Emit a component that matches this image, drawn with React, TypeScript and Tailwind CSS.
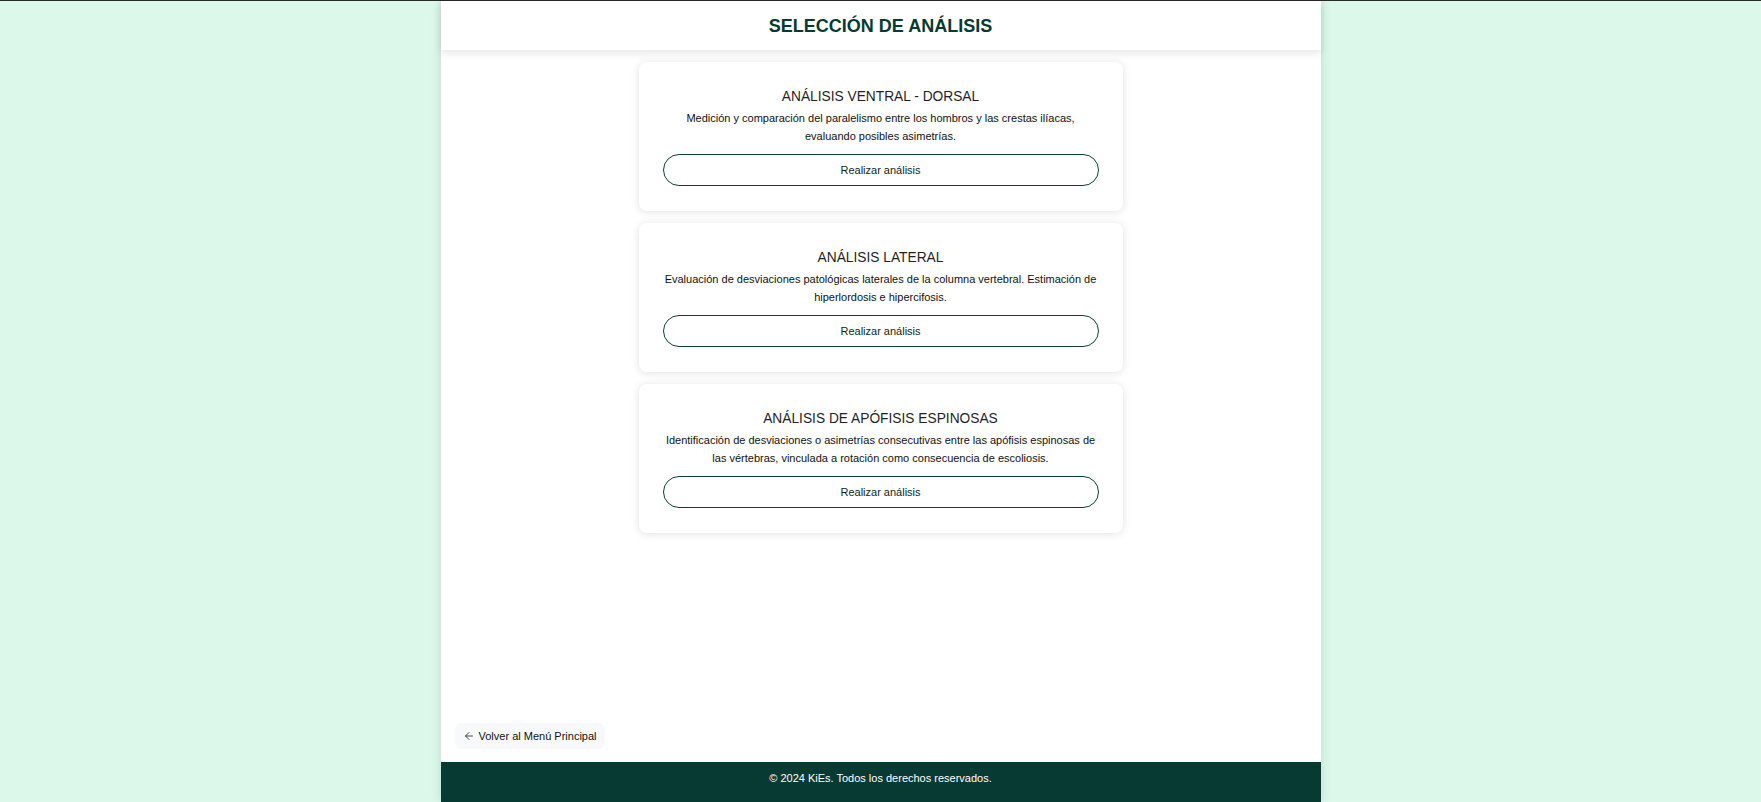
import { ArrowLeft } from 'lucide-react';

type Analisis = {
  titulo: string;
  descripcion: string[];
};

const analisis: Analisis[] = [
  {
    titulo: 'ANÁLISIS VENTRAL - DORSAL',
    descripcion: [
      'Medición y comparación del paralelismo entre los hombros y las crestas ilíacas,',
      'evaluando posibles asimetrías.',
    ],
  },
  {
    titulo: 'ANÁLISIS LATERAL',
    descripcion: [
      'Evaluación de desviaciones patológicas laterales de la columna vertebral. Estimación de',
      'hiperlordosis e hipercifosis.',
    ],
  },
  {
    titulo: 'ANÁLISIS DE APÓFISIS ESPINOSAS',
    descripcion: [
      'Identificación de desviaciones o asimetrías consecutivas entre las apófisis espinosas de',
      'las vértebras, vinculada a rotación como consecuencia de escoliosis.',
    ],
  },
];

const AnalisisCard = ({ item }: { item: Analisis }) => {
  return (
    <div className="w-[484px] rounded-lg bg-white px-6 pt-[25px] pb-[25px] text-center shadow-[0_1px_8px_rgba(0,0,0,0.12)]">
      <h2 className="text-[13.75px] leading-5 text-[#1f1f1f]">{item.titulo}</h2>
      <p className="mt-0.5 text-[11px] leading-[18px] text-[#111]">
        {item.descripcion[0]}
        <br />
        {item.descripcion[1]}
      </p>
      <button className="mt-[9px] flex h-8 w-full items-center justify-center rounded-full border-[1.5px] border-[#0c4037] bg-white text-[11px] text-[#0f1f1c]">
        Realizar análisis
      </button>
    </div>
  );
};

const App = () => {
  return (
    <div
      className="flex min-h-screen justify-center border-t border-[#2a2a2a] bg-[#dbf8ea]"
      style={{ fontFamily: '"Liberation Sans", Arial, sans-serif' }}
    >
      <div className="flex h-[801px] w-[880px] flex-col bg-white shadow-[0_0_10px_rgba(0,0,0,0.12)]">
        <header className="relative z-10 flex h-[49px] shrink-0 items-center justify-center bg-white shadow-[0_3px_8px_rgba(0,0,0,0.1)]">
          <h1 className="text-lg font-bold text-[#053a31]">SELECCIÓN DE ANÁLISIS</h1>
        </header>

        <main className="flex flex-1 flex-col">
          <div className="flex flex-col items-center gap-3 pt-3">
            {analisis.map((item) => (
              <AnalisisCard key={item.titulo} item={item} />
            ))}
          </div>

          <div className="mt-auto px-[14px] pb-[13px]">
            <button className="flex h-[26px] items-center gap-1 rounded-md bg-[#f7f9fb] px-2 text-[11px] text-[#111]">
              <ArrowLeft size={12} strokeWidth={1.5} />
              Volver al Menú Principal
            </button>
          </div>
        </main>

        <footer className="h-10 shrink-0 bg-[#073a33] pt-2 text-center text-[11px] leading-4 text-white">
          © 2024 KiEs. Todos los derechos reservados.
        </footer>
      </div>
    </div>
  );
};

export default App;
